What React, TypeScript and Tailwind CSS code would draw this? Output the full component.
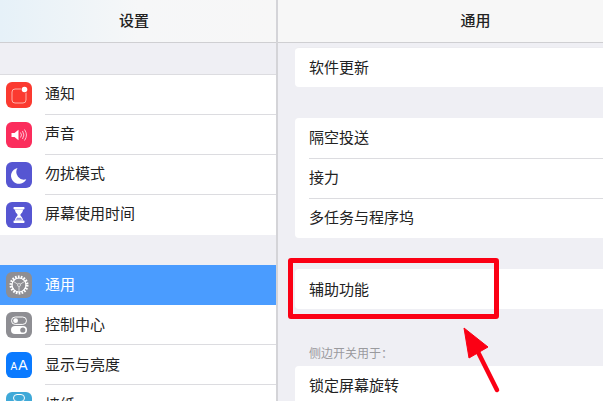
const font = { fontFamily: '"Noto Sans CJK SC", "Liberation Sans", sans-serif' };

function Icon({ bg, children }: { bg: string; children: React.ReactNode }) {
  return (
    <div className={`w-[26px] h-[26px] rounded-[6px] flex items-center justify-center shrink-0 overflow-hidden ${bg}`}>
      <svg width="26" height="26" viewBox="0 0 26 26">{children}</svg>
    </div>
  );
}

const icons: Record<string, { bg: string; el: React.ReactNode }> = {
  bell: {
    bg: "bg-[#fb3a30]",
    el: (
      <>
        <rect x="6" y="7" width="14" height="14" rx="3" fill="none" stroke="#ffb0a8" strokeWidth="1" />
        <circle cx="18.5" cy="7.5" r="3.6" fill="#fb3a30" />
        <circle cx="18.5" cy="7.5" r="2.8" fill="#fff" />
      </>
    ),
  },
  sound: {
    bg: "bg-[#fb2d5c]",
    el: (
      <>
        <path d="M5.5 11h3l4-3.2v10.4l-4-3.2h-3z" fill="#fff" />
        <path d="M14.5 10.5a4 4 0 0 1 0 5M16.5 9a7 7 0 0 1 0 8M18.5 7.5a9.5 9.5 0 0 1 0 11" fill="none" stroke="#ffc4d2" strokeWidth="1" />
      </>
    ),
  },
  moon: {
    bg: "bg-[#5656d2]",
    el: <path d="M11.5 6a7.6 7.6 0 0 0 8.8 11.2A8 8 0 1 1 11.5 6z" fill="#fff" />,
  },
  hourglass: {
    bg: "bg-[#5656d2]",
    el: (
      <>
        <rect x="7.5" y="5" width="11" height="2.4" rx="0.8" fill="#fff" />
        <rect x="7.5" y="18.6" width="11" height="2.4" rx="0.8" fill="#fff" />
        <path d="M9 7.4h8c0 3.4-2.6 4.2-2.6 5.6s2.6 2.2 2.6 5.6H9c0-3.4 2.6-4.2 2.6-5.6S9 10.8 9 7.4z" fill="#fff" />
        <path d="M11 15.8h4l1 2h-6z" fill="#8f8fe0" />
      </>
    ),
  },
  gear: {
    bg: "bg-[#8e8e93]",
    el: (
      <>
        <circle cx="13" cy="13" r="8" fill="none" stroke="#fff" strokeWidth="3" strokeDasharray="1.6 1.2" />
        <circle cx="13" cy="13" r="7" fill="none" stroke="#fff" strokeWidth="1.2" />
        <path d="M13 13L7.5 9.5M13 13l5.5-3.5M13 13v6.5" stroke="#e4e4e4" strokeWidth="0.9" />
        <circle cx="13" cy="13" r="1.5" fill="#8e8e93" stroke="#e4e4e4" strokeWidth="0.8" />
      </>
    ),
  },
  control: {
    bg: "bg-[#8e8e93]",
    el: (
      <>
        <rect x="5.5" y="5" width="15" height="7.4" rx="3.7" fill="none" stroke="#fff" strokeWidth="1" />
        <circle cx="9.6" cy="8.7" r="2.4" fill="#fff" />
        <rect x="5" y="14" width="16" height="8" rx="4" fill="#fff" />
        <circle cx="16.8" cy="18" r="2.6" fill="#8e8e93" />
      </>
    ),
  },
};

function Row({ icon, label, selected, last, aa, cut, high }: { icon?: string; label: string; selected?: boolean; last?: boolean; aa?: boolean; cut?: boolean; high?: boolean }) {
  return (
    <div className={`h-10 flex items-center pl-[6px] shrink-0 ${selected ? "bg-[#4a9cff]" : "bg-white"}`}>
      {aa ? (
        <div className="w-[26px] h-[26px] rounded-[6px] bg-[#0a7aff] text-white flex items-end justify-center gap-[1px] pb-[6px] font-['Liberation_Sans',sans-serif] leading-none shrink-0">
          <span className="text-[10px]">A</span>
          <span className="text-[14px]">A</span>
        </div>
      ) : cut ? (
        <div className="w-[26px] h-[26px] rounded-[6px] bg-[#3fa9d8] shrink-0 flex justify-center pt-[2px]">
          <div className="w-[12px] h-[8px] rounded-full border border-white" />
        </div>
      ) : (
        <Icon bg={icons[icon!].bg}>{icons[icon!].el}</Icon>
      )}
      <div className={`ml-[13px] flex-1 h-full flex items-center border-b ${high ? "pb-[4px]" : "pb-[2px]"} ${last || selected ? "border-transparent" : "border-[#dcdce0]"}`}>
        <span className={`text-[15px] leading-none ${selected ? "text-white" : "text-[#222]"}`}>{label}</span>
      </div>
    </div>
  );
}

function RightRow({ label, first, pad = "pb-[3px]" }: { label: string; first?: boolean; pad?: string }) {
  return (
    <div className="h-10 pl-[14px] shrink-0">
      <div className={`h-full flex items-center ${pad} ${first ? "" : "border-t border-[#dcdce0]"}`}>
        <span className="text-[15px] leading-none text-[#222]">{label}</span>
      </div>
    </div>
  );
}

function Header({ title, gradient }: { title: string; gradient?: boolean }) {
  return (
    <div className={`h-[43px] shrink-0 flex items-center justify-center pb-[4px] border-b border-[#cfcfd2] ${gradient ? "pr-[8px] bg-gradient-to-r from-[#e6f1f8] via-[#f6f7f8] to-[#f7f7f7]" : "pl-[70px] bg-[#f7f7f7]"}`}>
      <span className="text-[15px] font-medium text-[#222] leading-none">{title}</span>
    </div>
  );
}

export default function App() {
  return (
    <div style={font} className="relative w-[603px] h-[401px] overflow-hidden flex bg-[#efeff4]">
      <div className="w-[276px] h-full flex flex-col shrink-0 bg-[#efeff4] overflow-hidden">
        <Header title="设置" gradient />
        <div className="h-[32px] shrink-0 border-b border-[#dcdce0]" />
        <Row icon="bell" label="通知" high />
        <Row icon="sound" label="声音" high />
        <Row icon="moon" label="勿扰模式" high />
        <Row icon="hourglass" label="屏幕使用时间" last high />
        <div className="h-[30px] shrink-0" />
        <Row icon="gear" label="通用" selected />
        <Row icon="control" label="控制中心" />
        <Row aa label="显示与亮度" />
        <Row cut label="墙纸" last />
      </div>
      <div className="w-[2px] bg-[#d4d4d8] shrink-0" />
      <div className="flex-1 flex flex-col overflow-hidden">
        <Header title="通用" />
        <div className="pl-[17px] flex flex-col">
          <div className="mt-1 bg-white rounded-l-[4px] border-t border-[#ececf0] h-10">
            <RightRow label="软件更新" first />
          </div>
          <div className="mt-[31px] bg-white rounded-l-[4px] flex flex-col">
            <RightRow label="隔空投送" first />
            <RightRow label="接力" pad="pb-[5px]" />
            <RightRow label="多任务与程序坞" pad="pb-[5px]" />
          </div>
          <div className="mt-[31px] bg-white rounded-l-[4px]">
            <RightRow label="辅助功能" first pad="pb-[1px]" />
          </div>
          <div className="h-[57px] flex items-end pb-[7px] pl-[14px] shrink-0">
            <span className="text-[12px] leading-none text-[#9a9a9e]">侧边开关用于：</span>
          </div>
          <div className="bg-white rounded-l-[4px]">
            <RightRow label="锁定屏幕旋转" first />
          </div>
        </div>
      </div>
      <div className="absolute left-[288px] top-[258px] w-[211px] h-[61px] border-[5px] border-[#fb0014] rounded-[3px]" />
      <svg className="absolute left-[455px] top-[320px]" width="50" height="81" viewBox="0 0 50 81">
        <path d="M9 8L14 38L33 27Z" fill="#fb0014" stroke="#fb0014" strokeWidth="1" strokeLinejoin="round" />
        <path d="M22 30L42 70" stroke="#fb0014" strokeWidth="4.5" strokeLinecap="round" />
      </svg>
    </div>
  );
}
